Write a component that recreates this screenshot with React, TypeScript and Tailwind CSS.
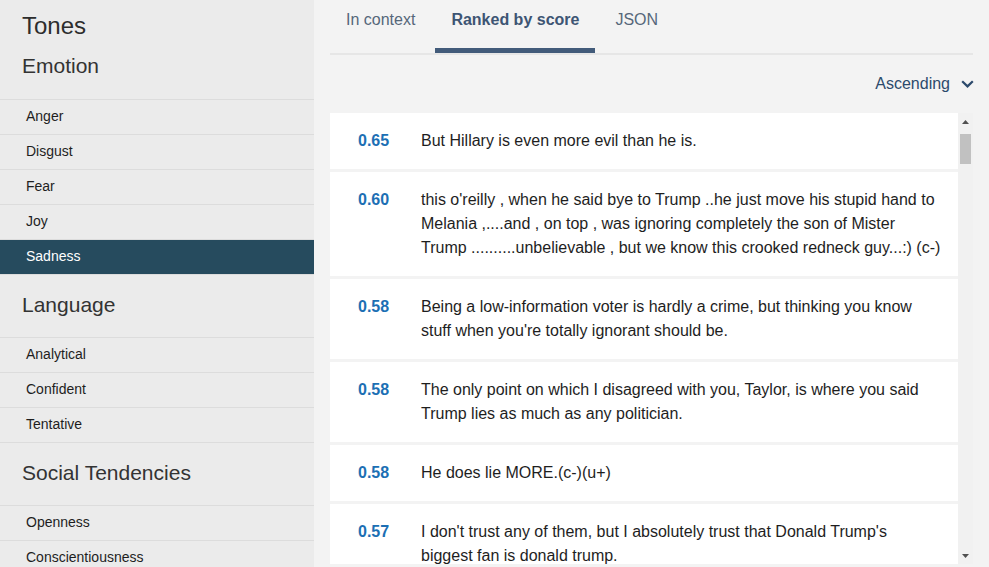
import React, { useState } from 'react';

const groups = [
  { title: 'Emotion', items: ['Anger', 'Disgust', 'Fear', 'Joy', 'Sadness'] },
  { title: 'Language', items: ['Analytical', 'Confident', 'Tentative'] },
  { title: 'Social Tendencies', items: ['Openness', 'Conscientiousness'] },
];

const sentences = [
  { score: '0.65', text: 'But Hillary is even more evil than he is.' },
  {
    score: '0.60',
    text: "this o'reilly , when he said bye to Trump ..he just move his stupid hand to Melania ,....and , on top , was ignoring completely the son of Mister Trump ..........unbelievable , but we know this crooked redneck guy...:) (c-)",
  },
  { score: '0.58', text: "Being a low-information voter is hardly a crime, but thinking you know stuff when you're totally ignorant should be." },
  { score: '0.58', text: 'The only point on which I disagreed with you, Taylor, is where you said Trump lies as much as any politician.' },
  { score: '0.58', text: 'He does lie MORE.(c-)(u+)' },
  { score: '0.57', text: "I don't trust any of them, but I absolutely trust that Donald Trump's biggest fan is donald trump." },
];

const tabs = ['In context', 'Ranked by score', 'JSON'];

function Scrollbar() {
  return (
    <div className="flex w-[15px] shrink-0 flex-col items-center bg-[#f1f1f1]">
      <div className="flex h-[15px] w-full items-center justify-center pt-[2px]">
        <svg width="7" height="4" viewBox="0 0 7 4">
          <polygon points="3.5,0 7,4 0,4" fill="#505050" />
        </svg>
      </div>
      <div className="mt-[6px] h-[30px] w-[11px] bg-[#c1c1c1]" />
      <div className="flex-1" />
      <div className="flex h-[15px] w-full items-center justify-center pb-[2px]">
        <svg width="7" height="4" viewBox="0 0 7 4">
          <polygon points="0,0 7,0 3.5,4" fill="#505050" />
        </svg>
      </div>
    </div>
  );
}

export default function App() {
  const [active, setActive] = useState('Sadness');
  const [tab, setTab] = useState('Ranked by score');

  return (
    <div className="flex h-screen overflow-hidden bg-[#f3f3f3] font-['Liberation_Sans',Arial,sans-serif]">
      <aside className="w-[314px] shrink-0 overflow-hidden bg-[#ebebeb]">
        <h1 className="pl-[22px] pt-[12px] text-[24px] leading-[28px] text-[#2d2d2d]">Tones</h1>
        {groups.map((group, gi) => (
          <div key={group.title}>
            <h2
              className={`pl-[22px] text-[21px] leading-[24px] text-[#333] ${
                gi === 0 ? 'pt-[14px] pb-[21px]' : 'pt-[18px] pb-[20px]'
              }`}
            >
              {group.title}
            </h2>
            <ul className="border-b border-[#dcdcdc]">
              {group.items.map((item) => (
                <li key={item}>
                  <button
                    type="button"
                    onClick={() => setActive(item)}
                    className={`flex h-[35px] w-full items-center border-t border-[#dcdcdc] pb-[2px] pl-[26px] text-left text-[14px] ${
                      active === item ? 'border-[#264b5e] bg-[#264b5e] text-white' : 'text-[#1e1e1e]'
                    }`}
                  >
                    {item}
                  </button>
                </li>
              ))}
            </ul>
          </div>
        ))}
      </aside>

      <main className="flex min-w-0 flex-1 flex-col px-4 pb-[3px]">
        <nav className="flex h-[55px] shrink-0 gap-1 border-b-2 border-[#e6e6e6]">
          {tabs.map((t) => (
            <button
              key={t}
              type="button"
              onClick={() => setTab(t)}
              className={`h-[53px] border-b-[5px] px-4 pb-[20px] pt-[12px] text-[16px] leading-[16px] ${
                tab === t ? 'border-[#425b7a] font-bold text-[#3d5573]' : 'border-transparent text-[#56677a]'
              }`}
            >
              {t}
            </button>
          ))}
        </nav>

        <div className="flex h-[58px] shrink-0 items-center justify-end gap-[11px]">
          <span className="text-[16px] text-[#2c4a6c]">Ascending</span>
          <svg width="13" height="8" viewBox="0 0 13 8" className="mr-[-1px]">
            <polyline points="1.2,1.2 6.5,6.4 11.8,1.2" fill="none" stroke="#2c4a6c" strokeWidth="2.2" />
          </svg>
        </div>

        <div className="flex min-h-0 flex-1">
          <div className="min-w-0 flex-1 overflow-hidden">
            {sentences.map((s, i) => (
              <div key={i} className="mb-[3px] flex bg-white py-4 text-[16px] leading-[24px]">
                <div className="w-[91px] shrink-0 pl-[28px] font-bold text-[#1c6fb4]">{s.score}</div>
                <p className="min-w-0 flex-1 pr-4 text-[#1e1e1e]">{s.text}</p>
              </div>
            ))}
          </div>
          <Scrollbar />
        </div>
      </main>
    </div>
  );
}
